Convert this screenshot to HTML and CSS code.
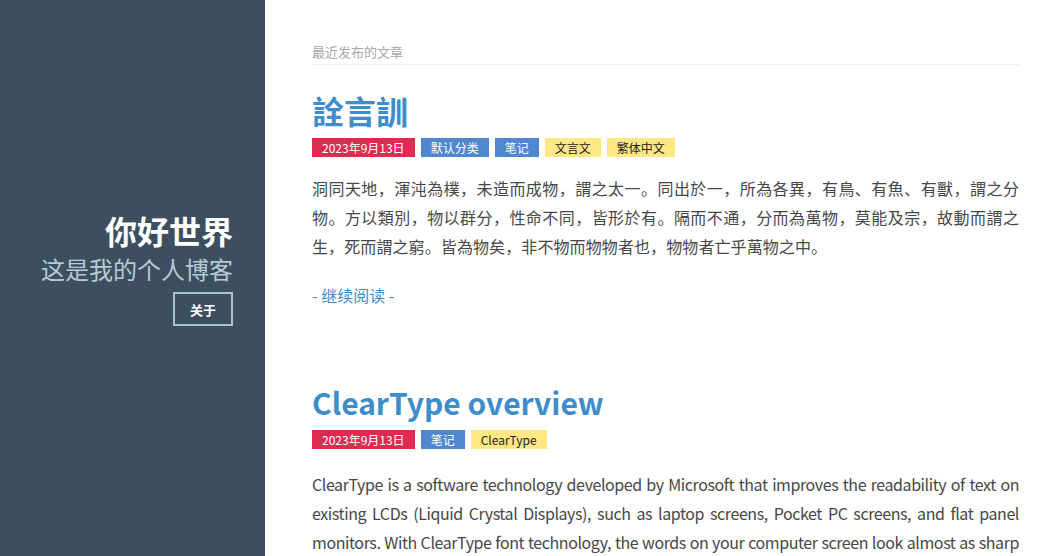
FILE: index.html
```html
<!DOCTYPE html>
<html lang="zh-CN">
<head>
<meta charset="utf-8">
<title>你好世界</title>
<link rel="stylesheet" href="styles.css">
</head>
<body>
<div class="layout">
  <aside class="sidebar">
    <h1 class="site-title">你好世界</h1>
    <p class="site-sub">这是我的个人博客</p>
    <a class="about-btn" href="#">关于</a>
  </aside>
  <main class="main">
    <div class="section-head">最近发布的文章</div>
    <article class="post">
      <h2 class="post-title">詮言訓</h2>
      <div class="tags">
        <span class="tag tag-date">2023年9月13日</span>
        <span class="tag tag-cat">默认分类</span>
        <span class="tag tag-cat">笔记</span>
        <span class="tag tag-tag">文言文</span>
        <span class="tag tag-tag">繁体中文</span>
      </div>
      <p class="excerpt cjk">洞同天地，渾沌為樸，未造而成物，謂之太一。同出於一，所為各異，有鳥、有魚、有獸，謂之分物。方以類別，物以群分，性命不同，皆形於有。隔而不通，分而為萬物，莫能及宗，故動而謂之生，死而謂之窮。皆為物矣，非不物而物物者也，物物者亡乎萬物之中。</p>
      <a class="more" href="#">- 继续阅读 -</a>
    </article>
    <article class="post">
      <h2 class="post-title latin">ClearType overview</h2>
      <div class="tags">
        <span class="tag tag-date">2023年9月13日</span>
        <span class="tag tag-cat">笔记</span>
        <span class="tag tag-tag">ClearType</span>
      </div>
      <p class="excerpt latin">ClearType is a software technology developed by Microsoft that improves the readability of text on existing LCDs (Liquid Crystal Displays), such as laptop screens, Pocket PC screens, and flat panel monitors. With ClearType font technology, the words on your computer screen look almost as sharp and clear as those printed on a piece of paper.</p>
    </article>
  </main>
</div>
</body>
</html>
```

FILE: styles.css
```css
* { box-sizing: border-box; }
html, body {
  margin: 0;
  padding: 0;
  height: 100%;
  overflow: hidden;
}
body {
  font-family: "Noto Sans CJK SC", "Noto Sans", sans-serif;
  background: #fff;
  color: #444;
}
.layout {
  display: flex;
  height: 100%;
}
.sidebar {
  width: 265px;
  flex: none;
  background: #3d4f5e;
  display: flex;
  flex-direction: column;
  justify-content: center;
  align-items: flex-end;
  padding: 0 32px 20px 0;
}
.site-title {
  margin: 0;
  font-size: 32px;
  line-height: 40px;
  font-weight: 700;
  color: #fff;
}
.site-sub {
  margin: 3px 0 0;
  font-size: 24px;
  line-height: 32px;
  color: #b4cadb;
}
.about-btn {
  margin-top: 7px;
  width: 60px;
  height: 34px;
  border: 2px solid #a9c1d3;
  color: #fff;
  font-size: 13px;
  font-weight: 700;
  text-decoration: none;
  display: flex;
  align-items: center;
  justify-content: center;
}
.main {
  flex: 1;
  padding: 42px 29px 0 47px;
  overflow: hidden;
}
.section-head {
  font-size: 13px;
  line-height: 20px;
  color: #a7a7a7;
  padding-bottom: 2px;
  border-bottom: 1px solid #eee;
}
.post {
  margin-top: 23px;
}
.post + .post {
  margin-top: 73px;
}
.post-title {
  margin: 0;
  font-size: 32px;
  line-height: 44px;
  font-weight: 700;
  color: #3e8dca;
}
.post-title.latin {
  font-size: 30px;
}
.tags {
  display: flex;
  gap: 6px;
  margin-top: 6px;
}
.tag {
  font-size: 12px;
  line-height: 19px;
  padding: 0 10px;
  color: #fff;
}
.tag-date { background: #e02b50; }
.tag-cat { background: #4f87d1; }
.tag-tag { background: #ffe784; color: #222; }
.excerpt {
  margin: 17px 0 0;
  font-size: 16px;
  line-height: 29px;
  text-align: justify;
  color: #474747;
}
.excerpt.cjk { letter-spacing: 0.1px; }
.excerpt.latin {
  margin-top: 21px;
  letter-spacing: -0.42px;
}
.more {
  display: inline-block;
  margin-top: 22px;
  font-size: 16px;
  line-height: 24px;
  color: #3e8dca;
  text-decoration: none;
}
```
